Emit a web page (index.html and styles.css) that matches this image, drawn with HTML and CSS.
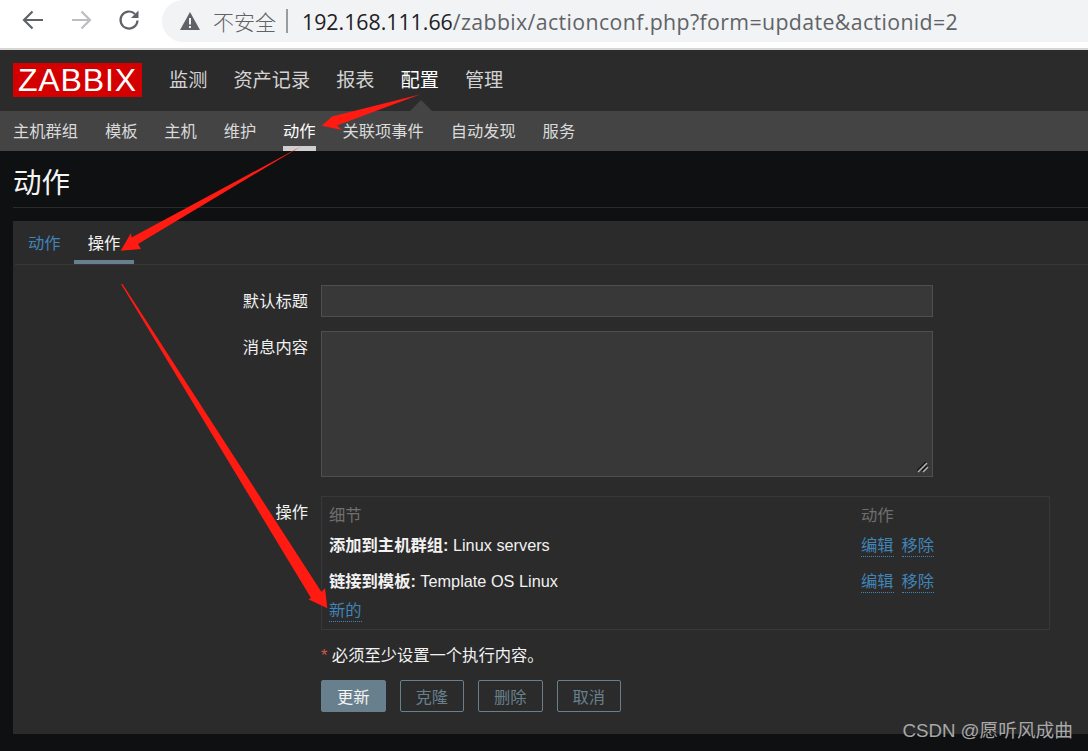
FILE: index.html
```html
<!DOCTYPE html>
<html lang="zh-CN">
<head>
<meta charset="utf-8">
<title>动作</title>
<link rel="stylesheet" href="styles.css">
</head>
<body>
<div class="chrome">
  <svg class="chrome-icon" width="24" height="24" viewBox="0 0 24 24"><path class="stroke-dark" d="M22 12H3.500M11.500 3.500L3 12l8.500 8.500"/></svg>
  <svg class="chrome-icon" width="24" height="24" viewBox="0 0 24 24"><path class="stroke-light" d="M3 12h18M12.500 3.500L21 12l-8.500 8.500"/></svg>
  <svg class="chrome-icon" width="24" height="24" viewBox="0 0 24 24"><path class="stroke-dark" d="M20.500 12.500a8.500 8.500 0 1 1-2.500-6.500"/><path class="fill-dark" d="M21.500 2.500v7.500H14z"/></svg>
  <div class="omnibox">
    <svg class="warn" width="20" height="18" viewBox="0 0 20 18"><path class="fill-warn" d="M10 0l10 18H0z"/><path class="warn-mark" d="M9 6h2v6.500H9zM9 14h2v2H9z"/></svg>
    <span class="insecure">不安全</span>
    <span class="divider"></span>
    <span class="url"><span class="host">192.168.111.66</span>/zabbix/actionconf.php?form=update&amp;actionid=2</span>
  </div>
</div>

<header class="topnav">
  <div class="logo">ZABBIX</div>
  <nav class="menu">
    <a>监测</a><a>资产记录</a><a>报表</a><a class="current">配置</a><a>管理</a>
  </nav>
</header>
<nav class="subnav">
  <a>主机群组</a><a>模板</a><a>主机</a><a>维护</a><a class="current">动作</a><a>关联项事件</a><a>自动发现</a><a>服务</a>
</nav>

<main class="page">
  <h1 class="title">动作</h1>
  <section class="card">
    <div class="tabs">
      <a class="tab link">动作</a>
      <a class="tab selected">操作</a>
    </div>
    <form class="form">
      <label class="label">默认标题</label>
      <div class="input"></div>
      <label class="label">消息内容</label>
      <div class="textarea">
        <svg class="grip" width="12" height="12" viewBox="0 0 12 12"><path class="grip-dark" d="M0 10l9-9M5 10l5-5"/><path class="grip-light" d="M1 11l9-9M6 11l5-5"/></svg>
      </div>
      <label class="label ops-label">操作</label>
      <div class="ops">
        <div class="ops-row ops-head"><span>细节</span><span>动作</span></div>
        <div class="ops-row first"><span><b>添加到主机群组:</b> Linux servers</span><span class="acts"><a class="dotted">编辑</a><a class="dotted">移除</a></span></div>
        <div class="ops-row second"><span><b>链接到模板:</b> Template OS Linux</span><span class="acts"><a class="dotted">编辑</a><a class="dotted">移除</a></span></div>
        <a class="dotted add">新的</a>
      </div>
      <div class="note"><span class="star">*</span> 必须至少设置一个执行内容。</div>
      <div class="buttons">
        <button type="button" class="btn primary">更新</button>
        <button type="button" class="btn">克隆</button>
        <button type="button" class="btn">删除</button>
        <button type="button" class="btn">取消</button>
      </div>
    </form>
  </section>
</main>

<svg class="marks" width="1088" height="751" viewBox="0 0 1088 751">
  <path class="red" d="M420.700 94.300L337 125.500 342 130 321.700 125.700 336 113 332 116.500Z"/>
  <path class="red" d="M301.700 146L138 244 141 249 120.700 250.700 131 233 131.500 237.500Z"/>
  <path class="red" d="M121 284L122.500 284 321.500 592 325 588 327.300 608.300 308.300 599.300 311 598Z"/>
</svg>
<div class="watermark">CSDN @愿听风成曲</div>
</body>
</html>
```
FILE: styles.css
```css
* { box-sizing: border-box; }
html, body { margin: 0; height: 751px; overflow: hidden; }
body {
  position: relative;
  background: #0f1012;
  font-family: "Liberation Sans", "Noto Sans CJK SC", sans-serif;
  color: #f2f2f2;
}
a { display: block; }

/* browser toolbar */
.chrome {
  height: 50px;
  background: #fff;
  border-bottom: 2px solid #d6d6d6;
  display: flex;
  align-items: flex-start;
  padding: 8px 0 0 21px;
  gap: 24px;
}
.chrome-icon { flex: none; }
.stroke-dark { fill: none; stroke: #5f6368; stroke-width: 2.2; }
.stroke-light { fill: none; stroke: #bcbec1; stroke-width: 2.2; }
.fill-dark { fill: #5f6368; }
.fill-warn { fill: #5f6368; }
.warn-mark { fill: #f1f3f4; }
.omnibox {
  margin: -8px 0 0 -3px;
  flex: 1;
  height: 42px;
  background: #f1f3f4;
  border-radius: 21px 0 0 21px;
  display: flex;
  align-items: center;
  padding-left: 18px;
}
.warn { margin-right: 13px; flex: none; }
.insecure { font-family: "Noto Sans CJK SC", sans-serif; font-size: 21px; color: #5f6368; font-weight: 300; }
.divider { width: 2px; height: 24px; background: #9a9da0; margin: 0 14px 0 10px; }
.url { font-family: "Open Sans", sans-serif; font-size: 21.300px; letter-spacing: 0.380px; color: #5f6368; white-space: nowrap; }
.host { color: #202124; letter-spacing: 0; }

/* zabbix top menu */
.topnav {
  height: 61px;
  background: #2b2b2b;
  display: flex;
  align-items: flex-start;
  padding: 13px 0 0 13px;
}
.logo {
  width: 129px;
  height: 34px;
  background: #d40000;
  color: #fff;
  font-size: 32px;
  letter-spacing: 0.900px;
  line-height: 35px;
  text-align: center;
}
.menu {
  display: flex;
  gap: 26px;
  margin-left: 27px;
  font-family: "Noto Sans CJK SC", sans-serif;
  font-size: 19.200px;
  line-height: 32px;
  color: #d3d3d3;
}
.menu .current { color: #fff; position: relative; }
.menu .current::after {
  content: "";
  position: absolute;
  left: 9px;
  bottom: -16px;
  border: 11px solid transparent;
  border-top: 0;
  border-bottom-color: #444;
}
.subnav {
  height: 40px;
  background: #444;
  display: flex;
  gap: 26.800px;
  padding-left: 13px;
  font-family: "Noto Sans CJK SC", sans-serif;
  font-size: 16.300px;
  line-height: 39px;
  color: #dadada;
}
.subnav .current {
  color: #fff;
  height: 40px;
  box-shadow: inset 0 -5px 0 #cfcfcf;
}

/* page body */
.page { padding-left: 13px; }
.title {
  margin: 0;
  height: 57px;
  border-bottom: 1px solid #2b2b2b;
  font-family: "Noto Sans CJK SC", sans-serif;
  font-size: 28.500px;
  font-weight: 400;
  line-height: 60px;
  color: #f4f4f4;
}
.card {
  margin-top: 13px;
  height: 513px;
  background: #2b2b2b;
}
.tabs {
  margin-left: 2px;
  height: 44px;
  border-bottom: 1px solid #383838;
  display: flex;
  font-family: "Noto Sans CJK SC", sans-serif;
}
.tab {
  font-size: 16.300px;
  line-height: 43px;
}
.tab.link { color: #4084b8; padding: 0 13.500px 0 13px; }
.tab.selected { color: #f4f4f4; box-shadow: inset 0 -4px 0 #68808d; height: 43px; padding: 0 13.700px; }

.form {
  display: grid;
  grid-template-columns: 295px 612px;
  column-gap: 13px;
  padding-top: 20px;
  font-size: 16.300px;
}
.label { text-align: right; line-height: 32px; color: #f2f2f2; }
.input {
  height: 32px;
  background: #383838;
  border: 1px solid #4f4f4f;
  margin-bottom: 14px;
}
.textarea {
  height: 146px;
  background: #383838;
  border: 1px solid #4f4f4f;
  position: relative;
  margin-bottom: 19px;
}
.grip { position: absolute; right: 3px; bottom: 3px; }
.grip-dark { fill: none; stroke: #111; stroke-width: 1.500; }
.grip-light { fill: none; stroke: #b0b0b0; stroke-width: 1.500; }

.ops-label { line-height: 32px; }
.ops {
  width: 729px;
  height: 134px;
  border: 1px solid #383838;
  padding: 6px 7px 0;
  position: relative;
  line-height: 24px;
}
.ops-row { display: flex; justify-content: space-between; }
.ops-row > :last-child { width: 181px; }
.ops-head { color: #6f6f6f; }
.first { margin-top: 6px; }
.second { margin-top: 12px; }
.ops b { font-weight: 700; }
.acts { display: flex; gap: 8px; margin-top: 1px; }
.dotted {
  color: #4084b8;
  border-bottom: 1px dotted #4084b8;
  line-height: 22px;
  width: max-content;
}
.add { margin-top: 6px; }
.note { grid-column: 2; margin-top: 13px; line-height: 24px; white-space: nowrap; }
.star { color: #d9534f; }
.buttons { grid-column: 2; display: flex; gap: 14px; margin-top: 13px; }
.btn {
  width: 64.500px;
  height: 32px;
  background: transparent;
  border: 1px solid #68808d;
  border-radius: 2px;
  color: #68808d;
  font: 16.300px "Noto Sans CJK SC", sans-serif;
  padding: 0;
}
.btn.primary { background: #68808d; color: #f4f4f4; }

/* overlaid annotations */
.marks { position: absolute; left: 0; top: 0; pointer-events: none; }
.red { fill: #ff1a12; }
.watermark {
  position: absolute;
  right: 15px;
  top: 718px;
  font-size: 18.700px;
  line-height: 26px;
  color: #a8a8a8;
}
```
